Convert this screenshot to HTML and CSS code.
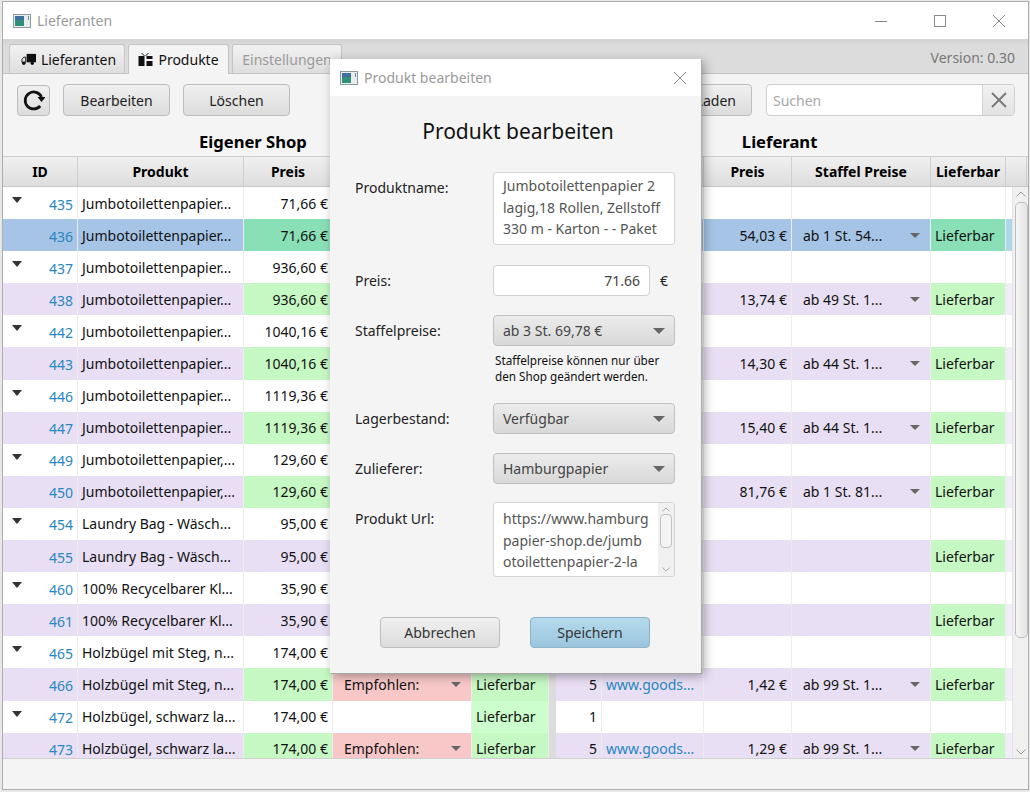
FILE: index.html
```html
<!DOCTYPE html>
<html lang="de">

<head>
  <meta charset="UTF-8">
  <title>Lieferanten</title>
  <link rel="stylesheet" href="styles.css">
</head>

<body>
  <div class="window">
    <div class="titlebar">
      <svg class="app-icon" viewBox="0 0 18 14"><rect x="0.5" y="0.5" width="17" height="13" fill="#e8eef0" stroke="#8a9aa0"/><rect x="2" y="2" width="9" height="10" fill="#2f8f78"/><rect x="2" y="2" width="9" height="4" fill="#3f6f9f"/><rect x="15" y="2" width="1" height="4" fill="#6a8a90"/></svg>
      <span class="title-text">Lieferanten</span>
      <div class="win-buttons">
        <svg viewBox="0 0 12 12"><path d="M0 6.5h12" stroke="#888" fill="none"/></svg>
        <svg viewBox="0 0 12 12"><rect x="0.5" y="0.5" width="11" height="11" stroke="#888" fill="none"/></svg>
        <svg viewBox="0 0 12 12"><path d="M0 0l12 12M12 0L0 12" stroke="#888" fill="none"/></svg>
      </div>
    </div>

    <div class="tabbar">
      <div class="tab tab-first">
        <svg class="tab-icon" viewBox="0 0 16 12"><path d="M6 0h10v9H6z" fill="#111"/><path d="M1 9V6l2-2.5h2V9z" fill="none" stroke="#111"/><circle cx="3" cy="10" r="1.8" fill="#111"/><circle cx="12" cy="10" r="1.8" fill="#111"/></svg>
        Lieferanten
      </div>
      <div class="tab tab-active">
        <svg class="tab-icon" viewBox="0 0 14 13"><path d="M0 3h6v10H0zM8 3h6v3H8zM8 8h6v5H8z" fill="#111"/><path d="M3 0l3 3M10 0L7 3" stroke="#111" fill="none"/></svg>
        Produkte
      </div>
      <div class="tab tab-disabled">Einstellungen</div>
      <span class="version">Version: 0.30</span>
    </div>

    <div class="toolbar">
      <button class="btn btn-icon">
        <svg viewBox="0 0 22 22" width="22" height="22"><path d="M18.5 8A8.5 8.5 0 1 0 17.2 17" stroke="#111" stroke-width="2.8" fill="none"/><path d="M14.5 8h8l-4 5z" fill="#111"/></svg>
      </button>
      <button class="btn btn-wide">Bearbeiten</button>
      <button class="btn btn-wide">Löschen</button>
      <button class="btn btn-load">Laden</button>
      <div class="search">
        <span class="search-text">Suchen</span>
        <span class="search-clear"><svg viewBox="0 0 16 16" width="16" height="16"><path d="M1 1l14 14M15 1L1 15" stroke="#777" stroke-width="1.8" fill="none"/></svg></span>
      </div>
    </div>

    <div class="groups">
      <span class="group-shop">Eigener Shop</span>
      <span class="group-supplier">Lieferant</span>
    </div>

    <div class="table">
      <div class="row head">
        <div>ID</div><div>Produkt</div><div>Preis</div><div></div><div></div><div class="gap"></div><div></div><div></div><div>Preis</div><div>Staffel Preise</div><div>Lieferbar</div>
        <div class="head-end"></div>
      </div>
      <div class="table-body">
        <div class="rows">
          <div class="row"><div class="id"><i class="tree"></i>435</div><div>Jumbotoilettenpapier...</div><div class="num">71,66 €</div><div></div><div></div><div class="gap"></div><div></div><div></div><div></div><div></div><div></div></div>
          <div class="row selected"><div class="id">436</div><div>Jumbotoilettenpapier...</div><div class="num ok">71,66 €</div><div></div><div></div><div class="gap"></div><div></div><div></div><div class="num">54,03 €</div><div class="combo">ab 1 St. 54...<i class="arrow"></i></div><div class="ok">Lieferbar</div></div>
          <div class="row"><div class="id"><i class="tree"></i>437</div><div>Jumbotoilettenpapier...</div><div class="num">936,60 €</div><div></div><div></div><div class="gap"></div><div></div><div></div><div></div><div></div><div></div></div>
          <div class="row child"><div class="id">438</div><div>Jumbotoilettenpapier...</div><div class="num ok">936,60 €</div><div></div><div></div><div class="gap"></div><div></div><div></div><div class="num">13,74 €</div><div class="combo">ab 49 St. 1...<i class="arrow"></i></div><div class="ok">Lieferbar</div></div>
          <div class="row"><div class="id"><i class="tree"></i>442</div><div>Jumbotoilettenpapier...</div><div class="num">1040,16 €</div><div></div><div></div><div class="gap"></div><div></div><div></div><div></div><div></div><div></div></div>
          <div class="row child"><div class="id">443</div><div>Jumbotoilettenpapier...</div><div class="num ok">1040,16 €</div><div></div><div></div><div class="gap"></div><div></div><div></div><div class="num">14,30 €</div><div class="combo">ab 44 St. 1...<i class="arrow"></i></div><div class="ok">Lieferbar</div></div>
          <div class="row"><div class="id"><i class="tree"></i>446</div><div>Jumbotoilettenpapier...</div><div class="num">1119,36 €</div><div></div><div></div><div class="gap"></div><div></div><div></div><div></div><div></div><div></div></div>
          <div class="row child"><div class="id">447</div><div>Jumbotoilettenpapier...</div><div class="num ok">1119,36 €</div><div></div><div></div><div class="gap"></div><div></div><div></div><div class="num">15,40 €</div><div class="combo">ab 44 St. 1...<i class="arrow"></i></div><div class="ok">Lieferbar</div></div>
          <div class="row"><div class="id"><i class="tree"></i>449</div><div>Jumbotoilettenpapier,...</div><div class="num">129,60 €</div><div></div><div></div><div class="gap"></div><div></div><div></div><div></div><div></div><div></div></div>
          <div class="row child"><div class="id">450</div><div>Jumbotoilettenpapier,...</div><div class="num ok">129,60 €</div><div></div><div></div><div class="gap"></div><div></div><div></div><div class="num">81,76 €</div><div class="combo">ab 1 St. 81...<i class="arrow"></i></div><div class="ok">Lieferbar</div></div>
          <div class="row"><div class="id"><i class="tree"></i>454</div><div>Laundry Bag - Wäsch...</div><div class="num">95,00 €</div><div></div><div></div><div class="gap"></div><div></div><div></div><div></div><div></div><div></div></div>
          <div class="row child"><div class="id">455</div><div>Laundry Bag - Wäsch...</div><div class="num">95,00 €</div><div></div><div></div><div class="gap"></div><div></div><div></div><div></div><div></div><div class="ok">Lieferbar</div></div>
          <div class="row"><div class="id"><i class="tree"></i>460</div><div>100% Recycelbarer Kl...</div><div class="num">35,90 €</div><div></div><div></div><div class="gap"></div><div></div><div></div><div></div><div></div><div></div></div>
          <div class="row child"><div class="id">461</div><div>100% Recycelbarer Kl...</div><div class="num">35,90 €</div><div></div><div></div><div class="gap"></div><div></div><div></div><div></div><div></div><div class="ok">Lieferbar</div></div>
          <div class="row"><div class="id"><i class="tree"></i>465</div><div>Holzbügel mit Steg, n...</div><div class="num">174,00 €</div><div></div><div></div><div class="gap"></div><div></div><div></div><div></div><div></div><div></div></div>
          <div class="row child"><div class="id">466</div><div>Holzbügel mit Steg, n...</div><div class="num ok">174,00 €</div><div class="combo bad">Empfohlen:<i class="arrow"></i></div><div class="ok">Lieferbar</div><div class="gap"></div><div class="num">5</div><div class="link">www.goods...</div><div class="num">1,42 €</div><div class="combo">ab 99 St. 1...<i class="arrow"></i></div><div class="ok">Lieferbar</div></div>
          <div class="row"><div class="id"><i class="tree"></i>472</div><div>Holzbügel, schwarz la...</div><div class="num">174,00 €</div><div></div><div class="ok-light">Lieferbar</div><div class="gap"></div><div class="num">1</div><div></div><div></div><div></div><div></div></div>
          <div class="row child"><div class="id">473</div><div>Holzbügel, schwarz la...</div><div class="num ok">174,00 €</div><div class="combo bad">Empfohlen:<i class="arrow"></i></div><div class="ok">Lieferbar</div><div class="gap"></div><div class="num">5</div><div class="link">www.goods...</div><div class="num">1,29 €</div><div class="combo">ab 99 St. 1...<i class="arrow"></i></div><div class="ok">Lieferbar</div></div>
        </div>
        <div class="scrollbar">
          <svg viewBox="0 0 10 6" width="10" height="6"><path d="M0.5 5.5L5 1l4.5 4.5" stroke="#999" fill="none"/></svg>
          <div class="thumb"></div>
          <svg viewBox="0 0 10 6" width="10" height="6"><path d="M0.5 0.5L5 5l4.5-4.5" stroke="#999" fill="none"/></svg>
        </div>
      </div>
    </div>

    <div class="statusbar"></div>
  </div>

  <div class="dialog">
    <div class="dialog-title">
      <svg class="app-icon" viewBox="0 0 18 14"><rect x="0.5" y="0.5" width="17" height="13" fill="#e8eef0" stroke="#8a9aa0"/><rect x="2" y="2" width="9" height="10" fill="#2f8f78"/><rect x="2" y="2" width="9" height="4" fill="#3f6f9f"/><rect x="15" y="2" width="1" height="4" fill="#6a8a90"/></svg>
      <span class="title-text">Produkt bearbeiten</span>
      <svg class="dialog-close" viewBox="0 0 12 12"><path d="M0 0l12 12M12 0L0 12" stroke="#888" fill="none"/></svg>
    </div>
    <div class="dialog-body">
      <h1>Produkt bearbeiten</h1>
      <div class="form-row row-name">
        <label>Produktname:</label>
        <div class="area">Jumbotoilettenpapier 2<br>lagig,18 Rollen, Zellstoff<br>330 m - Karton - - Paket</div>
      </div>
      <div class="form-row row-price">
        <label>Preis:</label>
        <div class="input">71.66</div>
        <span class="unit">€</span>
      </div>
      <div class="form-row row-combo">
        <label>Staffelpreise:</label>
        <div class="select">ab 3 St. 69,78 €<i class="arrow"></i></div>
      </div>
      <p class="note">Staffelpreise können nur über<br>den Shop geändert werden.</p>
      <div class="form-row row-combo row-stock">
        <label>Lagerbestand:</label>
        <div class="select">Verfügbar<i class="arrow"></i></div>
      </div>
      <div class="form-row row-combo row-supplier">
        <label>Zulieferer:</label>
        <div class="select">Hamburgpapier<i class="arrow"></i></div>
      </div>
      <div class="form-row row-url">
        <label>Produkt Url:</label>
        <div class="area area-url">
          <div class="area-text">https://www.hamburg<br>papier-shop.de/jumb<br>otoilettenpapier-2-la</div>
          <div class="mini-scroll">
            <svg viewBox="0 0 10 6" width="8" height="5"><path d="M0.5 5.5L5 1l4.5 4.5" stroke="#999" fill="none"/></svg>
            <div class="mini-thumb"></div>
            <svg viewBox="0 0 10 6" width="8" height="5"><path d="M0.5 0.5L5 5l4.5-4.5" stroke="#999" fill="none"/></svg>
          </div>
        </div>
      </div>
      <div class="dialog-actions">
        <button class="btn btn-action">Abbrechen</button>
        <button class="btn btn-action btn-primary">Speichern</button>
      </div>
    </div>
  </div>
</body>

</html>
```

FILE: styles.css
```css
* {
  box-sizing: border-box;
}

html,
body {
  margin: 0;
  height: 792px;
  overflow: hidden;
  background: #e8e8e8;
}

body {
  font-family: "Noto Sans", "Open Sans", sans-serif;
  font-size: 14px;
  color: #111;
}

.window {
  width: 1027px;
  height: 789px;
  margin: 1px 0 0 2px;
  border: 1px solid #adadad;
  background: #f4f4f4;
  display: flex;
  flex-direction: column;
}

.titlebar {
  height: 37px;
  background: #fff;
  display: flex;
  align-items: center;
  padding-left: 10px;
  flex: none;
}

.app-icon {
  width: 18px;
  height: 14px;
  flex: none;
}

.title-text {
  margin-left: 6px;
  color: #9a9a9a;
}

.win-buttons {
  margin-left: auto;
  display: flex;
  gap: 47px;
  padding-right: 23px;
}

.win-buttons svg {
  width: 12px;
  height: 12px;
}

.tabbar {
  height: 35px;
  flex: none;
  background: linear-gradient(#d2d2d2, #dcdcdc 20%);
  border-bottom: 1px solid #c4c4c4;
  display: flex;
  align-items: flex-end;
  padding-left: 6px;
  gap: 3px;
  position: relative;
}

.tab {
  height: 29px;
  width: 116px;
  background: linear-gradient(#f2f2f2, #dedede);
  border: 1px solid #c4c4c4;
  border-bottom: none;
  border-radius: 3px 3px 0 0;
  display: flex;
  align-items: center;
  justify-content: center;
  gap: 5px;
}

.tab-first {
  padding-left: 3px;
}

.tab-active {
  width: 101px;
  background: #f4f4f4;
  height: 30px;
  margin-bottom: -1px;
}

.tab-disabled {
  width: 110px;
  color: #9a9a9a;
}

.tab-icon {
  width: 15px;
  height: 13px;
}

.version {
  margin-left: auto;
  padding: 2px 13px 0 0;
  align-self: center;
  color: #777;
}

.toolbar {
  height: 54px;
  flex: none;
  display: flex;
  align-items: center;
  padding: 0 13px 2px 14px;
}

.btn {
  height: 32px;
  font: inherit;
  color: #222;
  background: linear-gradient(#f0f0f0, #dcdcdc);
  border: 1px solid #bdbdbd;
  border-radius: 4px;
  padding: 0;
}

.btn-icon {
  width: 33px;
  height: 31px;
  display: flex;
  align-items: center;
  justify-content: center;
  margin-right: 13px;
}

.btn-wide {
  width: 107px;
  margin-right: 13px;
}

.btn-load {
  width: 140px;
  margin-left: auto;
  margin-right: 14px;
  text-align: right;
  padding-right: 15px;
}

.search {
  width: 249px;
  height: 32px;
  background: #fff;
  border: 1px solid #cfcfcf;
  border-radius: 4px;
  display: flex;
  align-items: center;
  justify-content: space-between;
  padding-left: 6px;
  overflow: hidden;
}

.search-text {
  color: #a8a8a8;
}

.search-clear {
  width: 32px;
  height: 32px;
  background: linear-gradient(#f2f2f2, #e2e2e2);
  border-left: 1px solid #d4d4d4;
  display: flex;
  align-items: center;
  justify-content: center;
}

.groups {
  height: 28px;
  flex: none;
  display: flex;
  align-items: center;
  padding-bottom: 2px;
  font-size: 16.6px;
  font-weight: 700;
  color: #000;
}

.group-shop {
  margin-left: 196px;
}

.group-supplier {
  margin-left: 435px;
}

.table {
  flex: 1;
  min-height: 0;
  width: 1025px;
  display: flex;
  flex-direction: column;
  border-top: 1px solid #cfcfcf;
  overflow: hidden;
}

.row {
  display: grid;
  grid-template-columns: 75px 166px 89px 139px 77px 7px 46px 102px 88px 139px 75px;
  height: 32.1px;
  background: #fff;
}

.row > div {
  display: flex;
  align-items: center;
  padding: 0 4px;
  border-right: 1px solid #ececec;
  white-space: nowrap;
  overflow: hidden;
  min-width: 0;
}

.row > .gap {
  background: #dcdcdc;
  padding: 0;
  border: none;
}

.head {
  grid-template-columns: 75px 166px 89px 139px 77px 7px 46px 102px 88px 139px 75px 21px;
  height: 30px;
  flex: none;
  background: linear-gradient(#f0f0f0, #dddddd);
  border-bottom: 1px solid #c8c8c8;
  font-weight: 700;
  color: #000;
}

.head > div {
  justify-content: center;
  border-right: 1px solid #cfcfcf;
}

.table-body {
  flex: 1;
  min-height: 0;
  display: flex;
  overflow: hidden;
}

.rows {
  flex: 1;
  min-width: 0;
  overflow: hidden;
  background: #fff;
}

.child {
  background: #f1ecf8;
}

.selected {
  background: #aed8ea;
}

.child > div {
  background: #e8dff4;
}

.selected > div {
  background: #a5c4e6;
}

.row > .num {
  justify-content: flex-end;
}

.row > .id {
  justify-content: flex-end;
  color: #2a86c0;
  position: relative;
  padding-top: 2px;
}

.tree {
  position: absolute;
  left: 9px;
  top: 10px;
  border-left: 5px solid transparent;
  border-right: 5px solid transparent;
  border-top: 6px solid #333;
}

.row > .ok {
  background: #c6f8c4;
}

.selected > .ok,
.selected > .num.ok {
  background: #8ae0b6;
}

.row > .ok-light {
  background: #ccfdcc;
}

.row > .bad {
  background: #f8c8c8;
}

.row > .link {
  color: #2a86c0;
}

.row > .combo {
  justify-content: space-between;
  padding: 0 10px 0 11px;
}

.arrow {
  flex: none;
  border-left: 6px solid transparent;
  border-right: 6px solid transparent;
  border-top: 6px solid #666;
}

.row .arrow {
  border-left-width: 5px;
  border-right-width: 5px;
  border-top-width: 5px;
}

.scrollbar {
  width: 16px;
  flex: none;
  background: #f0f0f0;
  border-left: 1px solid #e4e4e4;
  display: flex;
  flex-direction: column;
  align-items: center;
  padding: 4px 0 3px 1px;
  justify-content: space-between;
}

.thumb {
  width: 13px;
  height: 436px;
  margin-top: 5px;
  margin-bottom: auto;
  background: linear-gradient(90deg, #f6f6f6, #e4e4e4);
  border: 1px solid #bdbdbd;
  border-radius: 5px;
}

.statusbar {
  height: 31px;
  flex: none;
  background: #f4f4f4;
  border-top: 1px solid #d0d0d0;
}

.dialog {
  position: absolute;
  left: 330px;
  top: 59px;
  width: 371px;
  height: 614px;
  background: #f4f4f4;
  box-shadow: 1px 1px 0 #a8a8a8, 3px 3px 10px rgba(0, 0, 0, 0.35);
  display: flex;
  flex-direction: column;
}

.dialog-title {
  height: 37px;
  flex: none;
  background: #fff;
  display: flex;
  align-items: center;
  padding: 0 15px 0 10px;
}

.dialog-close {
  width: 12px;
  height: 12px;
  margin-left: auto;
}

.dialog-body {
  flex: 1;
  padding: 0 25px;
  color: #222;
}

.dialog-body h1 {
  margin: 19px 0 25px;
  height: 32px;
  line-height: 32px;
  font-size: 21px;
  font-weight: 400;
  text-align: center;
  color: #111;
  padding-left: 5px;
}

.form-row {
  display: flex;
  align-items: flex-start;
}

.form-row label {
  width: 138px;
  height: 31px;
  flex: none;
  line-height: 32px;
}

.row-name label {
  line-height: 31px;
}

.area {
  width: 182px;
  background: #fff;
  border: 1px solid #d4d4d4;
  border-radius: 3px;
  padding: 2px 9px;
  line-height: 21.5px;
  color: #555;
  height: 73px;
  white-space: nowrap;
  overflow: hidden;
}

.input {
  width: 157px;
  height: 31px;
  background: #fff;
  border: 1px solid #d0d0d0;
  border-radius: 4px;
  text-align: right;
  padding-right: 9px;
  line-height: 29px;
  color: #444;
}

.unit {
  margin-left: 10px;
  line-height: 31px;
}

.row-price {
  margin-top: 20px;
}

.row-combo {
  margin-top: 19px;
}

.row-stock {
  margin-top: 19px;
}

.row-supplier {
  margin-top: 19px;
}

.select {
  width: 182px;
  height: 31px;
  background: linear-gradient(#ececec, #d8d8d8);
  border: 1px solid #c0c0c0;
  border-radius: 4px;
  display: flex;
  align-items: center;
  justify-content: space-between;
  padding: 0 9px;
  color: #444;
}

.note {
  margin: 6px 0 0 140px;
  font-size: 11.7px;
  line-height: 16px;
  color: #111;
}

.row-url {
  margin-top: 18px;
}

.row-url label {
  line-height: 34px;
}

.area-url {
  height: 75px;
  display: flex;
  padding: 0;
}

.area-text {
  flex: 1;
  padding: 5px 9px;
  overflow: hidden;
}

.mini-scroll {
  width: 16px;
  flex: none;
  background: #f0f0f0;
  display: flex;
  flex-direction: column;
  align-items: center;
  padding: 4px 0;
}

.mini-thumb {
  width: 12px;
  height: 34px;
  margin: 2px 0 auto;
  background: #f4f4f4;
  border: 1px solid #c0c0c0;
  border-radius: 4px;
}

.dialog-actions {
  display: flex;
  gap: 30px;
  margin: 40px 0 0 25px;
}

.btn-action {
  width: 120px;
  height: 31px;
  color: #333;
}

.btn-primary {
  background: linear-gradient(#b4daec, #9cc6de);
  border-color: #8cb2c8;
}
```
